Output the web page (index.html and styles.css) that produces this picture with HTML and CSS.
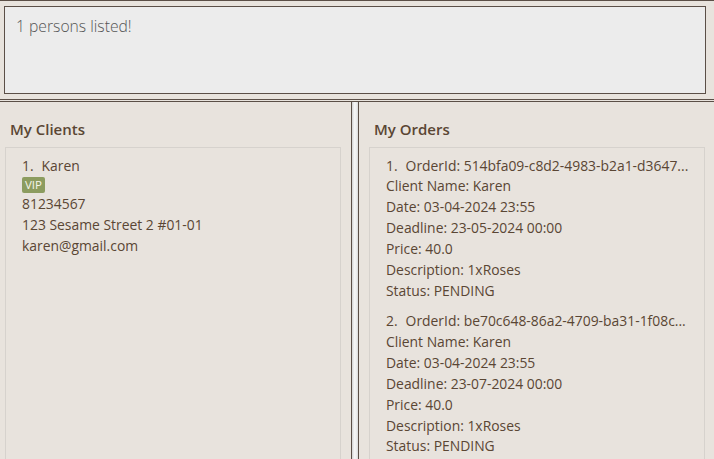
FILE: index.html
```html
<!DOCTYPE html>
<html lang="en">
<head>
<meta charset="utf-8">
<title>Clients and Orders</title>
<link rel="stylesheet" href="styles.css">
</head>
<body>
<div class="app">
  <div class="result-wrap">
    <div class="result">1 persons listed!</div>
  </div>
  <div class="split">
    <div class="split-inner">
      <section class="pane pane-left">
        <h2 class="pane-title">My Clients</h2>
        <div class="list">
          <div class="cell">
            <div class="line"><span class="idx">1.</span>Karen</div>
            <div class="tags"><span class="tag">VIP</span></div>
            <div class="line">81234567</div>
            <div class="line">123 Sesame Street 2 #01-01</div>
            <div class="line">karen@gmail.com</div>
          </div>
        </div>
      </section>
      <div class="divider"></div>
      <section class="pane pane-right">
        <h2 class="pane-title">My Orders</h2>
        <div class="list">
          <div class="cell">
            <div class="line"><span class="idx">1.</span>OrderId: 514bfa09-c8d2-4983-b2a1-d3647...</div>
            <div class="line">Client Name: Karen</div>
            <div class="line">Date: 03-04-2024 23:55</div>
            <div class="line">Deadline: 23-05-2024 00:00</div>
            <div class="line">Price: 40.0</div>
            <div class="line">Description: 1xRoses</div>
            <div class="line">Status: PENDING</div>
          </div>
          <div class="cell">
            <div class="line"><span class="idx">2.</span>OrderId: be70c648-86a2-4709-ba31-1f08c...</div>
            <div class="line">Client Name: Karen</div>
            <div class="line">Date: 03-04-2024 23:55</div>
            <div class="line">Deadline: 23-07-2024 00:00</div>
            <div class="line">Price: 40.0</div>
            <div class="line">Description: 1xRoses</div>
            <div class="line">Status: PENDING</div>
          </div>
        </div>
      </section>
    </div>
  </div>
</div>
</body>
</html>
```

FILE: styles.css
```css
html, body {
  margin: 0;
  padding: 0;
  height: 459px;
  overflow: hidden;
  background: #e8e3dd;
}

.app {
  height: 459px;
  box-sizing: border-box;
  border-top: 1px solid #5b4f47;
  display: flex;
  flex-direction: column;
  font-family: "Open Sans", "Noto Sans", sans-serif;
  color: #5a4634;
}

.result-wrap {
  padding: 5px 8px 5px 4px;
}

.result {
  height: 82px;
  border: 1px solid #5b4f47;
  background: #ececec;
  padding: 4px 11px 0;
  font-size: 15.7px;
  font-weight: 300;
  line-height: 30px;
  color: #555555;
}

.split {
  flex: 1;
  min-height: 0;
  border-top: 1px solid #5b4f47;
  padding-top: 1px;
  display: flex;
  flex-direction: column;
}

.split-inner {
  flex: 1;
  min-height: 0;
  border-top: 1px solid #5b4f47;
  display: flex;
}

.pane {
  display: flex;
  flex-direction: column;
  min-height: 0;
}

.pane-left {
  width: 346px;
  padding: 0 0 0 5px;
  border-right: 1px solid #5b4f47;
}

.pane-left .list {
  margin-right: 10px;
}

.divider {
  width: 6px;
  background: linear-gradient(to right, #d2d2d2 0, #f6f6f6 40%, #f0f0f0 70%, #d8d8d8 100%);
}

.pane-right {
  flex: 1;
  border-left: 1px solid #5b4f47;
  padding: 0 9px 0 10px;
}

.pane-title {
  margin: 0;
  padding: 17px 0 8px 5px;
  font-size: 15px;
  font-weight: 600;
  line-height: 20px;
}

.list {
  flex: 1;
  border: 1px solid #d6d2cd;
  border-bottom: none;
}

.cell {
  padding: 7.5px 8px 2.5px 16px;
  font-size: 13.9px;
  font-weight: 500;
  line-height: 20.85px;
  white-space: nowrap;
  overflow: hidden;
}

.idx {
  margin-right: 8px;
}

.tags {
  display: flex;
  padding: 0.5px 0 1px;
}

.tag {
  display: inline-block;
  height: 16px;
  line-height: 16px;
  padding: 0 3px;
  border-radius: 2px;
  background: #8c9c5f;
  color: #f6f6ea;
  font-size: 11.5px;
}
```
